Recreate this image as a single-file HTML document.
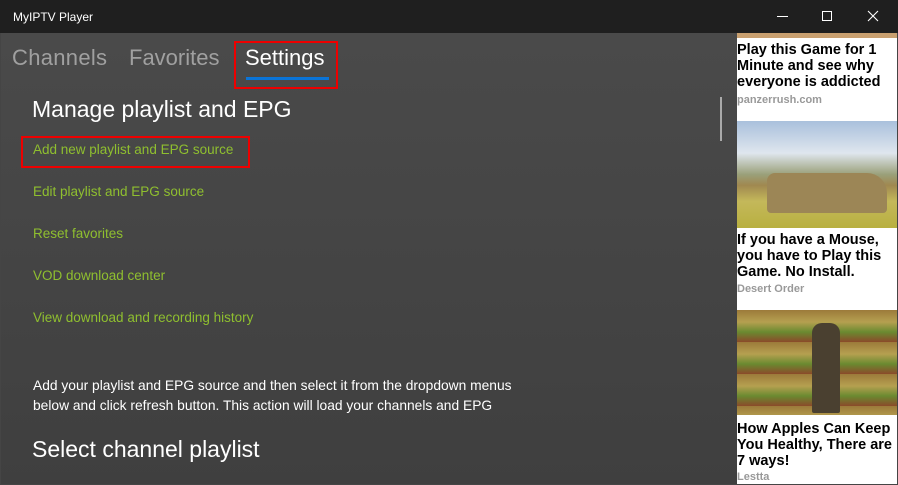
<!DOCTYPE html>
<html><head><style>
body{margin:0;width:898px;height:485px;overflow:hidden;background:#454545;font-family:"Liberation Sans",sans-serif;position:relative}
.tb{position:absolute;left:0;top:0;width:898px;height:33px;background:#1f1f1f;color:#fff;font-size:12px}
.main{position:absolute;left:1px;top:33px;width:736px;height:451px;background:linear-gradient(#4a4a4a,#3f3f3f)}
.ab{position:absolute;color:#fff}
.tab{position:absolute;top:45px;font-size:22px;color:#a0a0a0}
.lnk{position:absolute;left:33px;font-size:13.5px;color:#8fbf2f}
.ad{position:absolute;left:737px;top:33px;width:160px;height:451px;background:#fff;overflow:hidden}
.ad h{display:block;position:absolute;left:0;font-weight:bold;font-size:14.5px;line-height:16px;color:#000;width:160px}
.ad s{position:absolute;left:0;text-decoration:none;font-weight:bold;font-size:11px;color:#999}
</style></head><body>
<div class="tb"><span style="position:absolute;left:13px;top:10px">MyIPTV Player</span>
<div style="position:absolute;left:777px;top:16px;width:11px;height:1px;background:#fff"></div>
<div style="position:absolute;left:822px;top:11px;width:8px;height:8px;border:1px solid #fff"></div>
<svg style="position:absolute;left:867px;top:10px" width="12" height="12"><path d="M1 1L11 11M11 1L1 11" stroke="#fff" stroke-width="1.1"/></svg>
</div>
<div class="main"></div>
<div class="tab" style="left:12px;letter-spacing:0.3px">Channels</div>
<div class="tab" style="left:129px">Favorites</div>
<div class="tab" style="left:245px;color:#fff">Settings</div>
<div style="position:absolute;left:246px;top:77px;width:83px;height:3px;background:#0a74d8"></div>
<div style="position:absolute;left:234px;top:41px;width:100px;height:44px;border:2px solid #e00"></div>
<div class="ab" style="left:32px;top:96px;font-size:23px">Manage playlist and EPG</div>
<div style="position:absolute;left:21px;top:136px;width:225px;height:28px;border:2px solid #e00"></div>
<div class="lnk" style="top:142px">Add new playlist and EPG source</div>
<div class="lnk" style="top:184px">Edit playlist and EPG source</div>
<div class="lnk" style="top:226px">Reset favorites</div>
<div class="lnk" style="top:268px">VOD download center</div>
<div class="lnk" style="top:310px">View download and recording history</div>
<div class="ab" style="left:33px;top:376px;font-size:13.8px;line-height:20px">Add your playlist and EPG source and then select it from the dropdown menus<br>below and click refresh button. This action will load your channels and EPG</div>
<div class="ab" style="left:32px;top:436px;font-size:23px">Select channel playlist</div>
<div style="position:absolute;left:720px;top:97px;width:2px;height:44px;background:#aaa"></div>
<div class="ad">
<div style="position:absolute;left:0;top:0;width:160px;height:5px;background:#c9a070"></div>
<h style="top:9px">Play this Game for 1 Minute and see why everyone is addicted</h>
<s style="top:61px">panzerrush.com</s>
<div style="position:absolute;left:0;top:88px;width:160px;height:107px;background:linear-gradient(#a9c0dc 0,#dfe6ee 30%,#9aa07a 50%,#a08850 60%,#c4b85a 75%,#b8b040)"></div>
<div style="position:absolute;left:30px;top:140px;width:120px;height:40px;background:#9c8656;border-radius:8px 20px 4px 4px"></div>
<h style="top:199px">If you have a Mouse, you have to Play this Game. No Install.</h>
<s style="top:250px">Desert Order</s>
<div style="position:absolute;left:0;top:277px;width:160px;height:105px;background:repeating-linear-gradient(#9c7a3a 0,#b5a050 12px,#6a8a30 22px,#8b4a2a 32px)"></div>
<div style="position:absolute;left:75px;top:290px;width:28px;height:90px;background:#4a4030;border-radius:10px 10px 2px 2px"></div>
<h style="top:388px">How Apples Can Keep You Healthy, There are 7 ways!</h>
<s style="top:438px">Lestta</s>
</div>
</body></html>
